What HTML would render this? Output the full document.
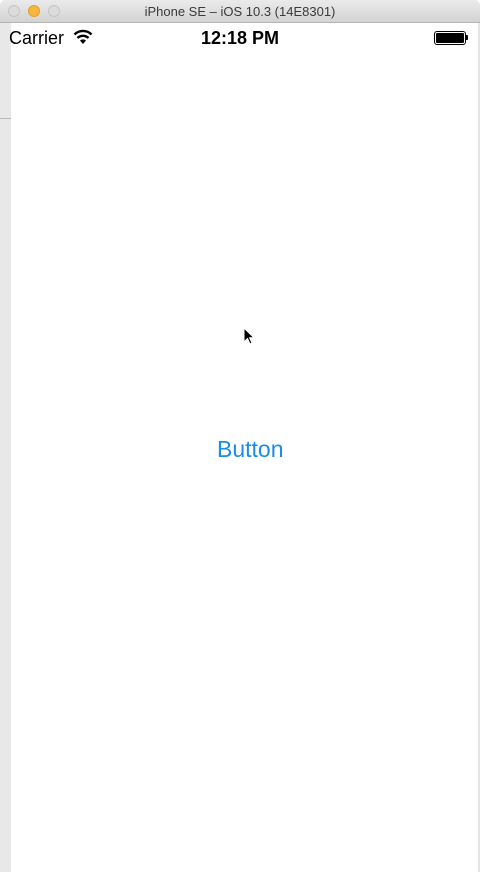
<!DOCTYPE html>
<html><head><meta charset="utf-8"><style>
html,body{margin:0;padding:0;width:480px;height:872px;overflow:hidden;background:#fff;font-family:"Liberation Sans",sans-serif;}
.tb{position:absolute;left:0;top:0;width:480px;height:22px;background:linear-gradient(#ebebeb,#d3d3d3);border-bottom:1px solid #b5b5b5;border-radius:5px 5px 0 0;}
.dot{position:absolute;top:5px;width:12px;height:12px;border-radius:50%;background:#dcdcdc;border:0.5px solid #c4c4c4;box-sizing:border-box;}
.title{position:absolute;top:4px;left:0;width:480px;text-align:center;font-size:13px;color:#3a3a3a;}
.left{position:absolute;left:0;top:23px;width:11px;height:849px;background:#e8e8e8;}
.leftline{position:absolute;left:0;top:118px;width:11px;height:1px;background:#b8b8b8;}
.right{position:absolute;left:478px;top:23px;width:2px;height:849px;background:#e4e4e4;}
.sb{position:absolute;top:28px;font-size:18px;color:#000;}
.btn{position:absolute;top:436px;left:217px;font-size:23px;color:#1a8cf0;}
</style></head><body>
<div class="tb">
<div class="dot" style="left:8px"></div>
<div class="dot" style="left:28px;background:#f6b73c;border-color:#dfa02f"></div>
<div class="dot" style="left:48px"></div>
<div class="title">iPhone SE – iOS 10.3 (14E8301)</div>
</div>
<div class="left"></div><div class="leftline"></div><div class="right"></div>
<div class="sb" style="left:9px">Carrier</div>
<svg style="position:absolute;left:73px;top:29px" width="20" height="16" viewBox="0 0 20 16">
<path d="M10 15 L7 11.5 A4.5 4.5 0 0 1 13 11.5 Z" fill="#000"/>
<path d="M4.5 9 A8 8 0 0 1 15.5 9" stroke="#000" stroke-width="2.4" fill="none"/>
<path d="M1.5 5.5 A12 12 0 0 1 18.5 5.5" stroke="#000" stroke-width="2.4" fill="none"/>
</svg>
<div class="sb" style="left:201px;font-weight:bold;font-size:18px">12:18 PM</div>
<div style="position:absolute;left:434px;top:31px;width:32px;height:14px;border:1px solid #000;border-radius:3px;box-sizing:border-box;padding:1px"><div style="width:100%;height:100%;background:#000;border-radius:1px"></div></div>
<div style="position:absolute;left:466px;top:35px;width:2px;height:5px;background:#000;border-radius:0 1px 1px 0"></div>
<svg style="position:absolute;left:243px;top:327px" width="14" height="20" viewBox="0 0 14 20">
<path d="M1 1 L1 15 L4.5 11.5 L7 17 L9 16 L6.6 10.8 L11 10.8 Z" fill="#000" stroke="#fff" stroke-width="1"/>
</svg>
<div class="btn">Button</div>
</body></html>
